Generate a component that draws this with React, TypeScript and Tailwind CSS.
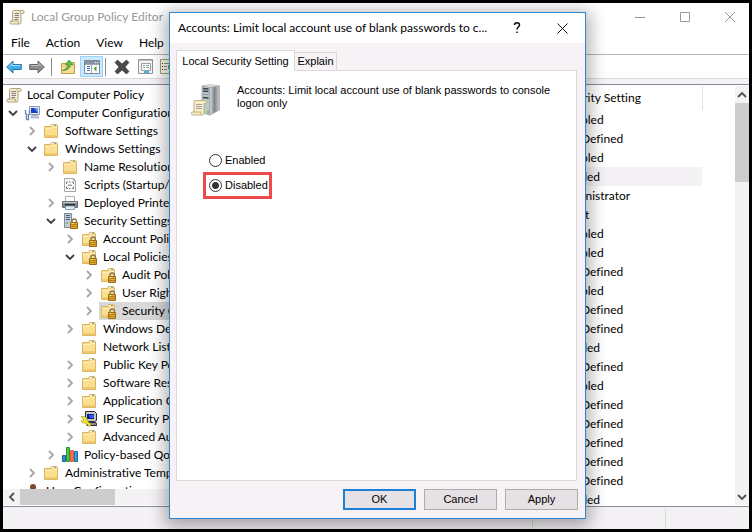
import React, { useState } from "react";

type IconName =
  | "scroll" | "computer" | "folder" | "script" | "printer" | "server"
  | "locked" | "ipsec" | "chart" | "user";

type Node = {
  label: string;
  icon: IconName;
  open?: boolean;
  leaf?: boolean;
  selected?: boolean;
  children?: Node[];
};

const tree: Node[] = [
  {
    label: "Computer Configuration", icon: "computer", open: true, children: [
      { label: "Software Settings", icon: "folder" },
      {
        label: "Windows Settings", icon: "folder", open: true, children: [
          { label: "Name Resolution Policy", icon: "folder" },
          { label: "Scripts (Startup/Shutdown)", icon: "script", leaf: true },
          { label: "Deployed Printers", icon: "printer" },
          {
            label: "Security Settings", icon: "server", open: true, children: [
              { label: "Account Policies", icon: "locked" },
              {
                label: "Local Policies", icon: "locked", open: true, children: [
                  { label: "Audit Policy", icon: "locked" },
                  { label: "User Rights Assignment", icon: "locked" },
                  { label: "Security Options", icon: "locked", selected: true },
                ],
              },
              { label: "Windows Defender Firewall", icon: "folder" },
              { label: "Network List Manager", icon: "folder", leaf: true },
              { label: "Public Key Policies", icon: "folder" },
              { label: "Software Restriction Policies", icon: "folder" },
              { label: "Application Control Policies", icon: "folder" },
              { label: "IP Security Policies", icon: "ipsec" },
              { label: "Advanced Audit Policy", icon: "folder" },
            ],
          },
          { label: "Policy-based QoS", icon: "chart" },
        ],
      },
      { label: "Administrative Templates", icon: "folder" },
    ],
  },
  { label: "User Configuration", icon: "user", leaf: true },
];

const settings = [
  "Disabled", "Not Defined", "Disabled", "Enabled", "Administrator", "Guest",
  "Disabled", "Disabled", "Not Defined", "Disabled", "Not Defined", "Not Defined",
  "Enabled", "Not Defined", "Disabled", "Not Defined", "Not Defined", "Not Defined",
  "Not Defined", "Not Defined", "Enabled",
];

function FolderShape() {
  return (
    <>
      <path d="M1.500 3.500h6l1-2h5l1 1v12h-13z" fill="#f6d887" stroke="#dcb562" />
      <path d="M2 5h12v9H2z" fill="#fbdf91" />
      <path d="M2 5.500h6.500l1-1H14" fill="none" stroke="#fff0c2" />
      <path d="M9 2.500h4" stroke="#fffbe9" />
      <path d="M11 2.500h2" stroke="#5fa8d8" />
      <path d="M2 12h12v2H2z" fill="#f1ca70" />
    </>
  );
}

function Lock() {
  return (
    <>
      <path d="M10 10V8.200a2.200 2.200 0 0 1 4.400 0V10" fill="none" stroke="#8d7a50" strokeWidth="1.400" />
      <path d="M8.500 9.500h7v6h-7z" fill="#e0a92f" stroke="#9a6b12" />
      <path d="M9 11.500h6M9 13.500h6" stroke="#b37f1b" />
      <path d="M9.500 10.500h2" stroke="#ffe08a" />
    </>
  );
}

function ScrollShape() {
  return (
    <>
      <path d="M4.500 1.500h9.500c1.500 0 1.500 3 0 3H12v9c0 1-.6 1.500-1.500 1.500H2c-1.500 0-1.500-3 0-3h1.500V3c0-1 .4-1.500 1-1.500z" fill="#f5ecd0" stroke="#b3a583" />
      <path d="M12 4.500c-1.300 0-1-3 .6-3M2 12h7.500c-.8 1.500 0 3 1 3" fill="none" stroke="#b3a583" />
      <path d="M5.500 4.500H10M5.500 6.500H10M5.500 8.500H10M5.500 10.500H9" stroke="#857b86" />
    </>
  );
}

function Icon({ name }: { name: IconName }) {
  return (
    <svg viewBox="0 0 16 16" className="size-4 shrink-0" aria-hidden="true">
      {name === "folder" && <FolderShape />}
      {name === "locked" && (<><FolderShape /><Lock /></>)}
      {name === "scroll" && <ScrollShape />}
      {name === "computer" && (
        <>
          <path d="M5.500 1.500h10v8h-10z" fill="#e8edf5" stroke="#8d97ab" />
          <path d="M7 3h7v5H7z" fill="#1a3fc4" />
          <path d="M10 3h4v5z" fill="#5f9af0" />
          <path d="M8 10h5l2 3H7z" fill="#c3cad8" stroke="#8f99ad" strokeWidth=".6" />
          <path d="M1.500 5v3c0 1 1 1.500 1 1.500v5h2v-5s1-.5 1-1.500V5" fill="none" stroke="#6d8bb0" strokeWidth="1.400" />
        </>
      )}
      {name === "script" && (
        <>
          <path d="M2.500 1.500h9l2 2v11h-11z" fill="#fbfbfb" stroke="#a6a6a6" />
          <path d="M11.500 1.500v2h2" fill="none" stroke="#a6a6a6" />
          <path d="M6 5H4.500v2M10 5h1.500v2M6 11.500H4.500v-2M10 11.500h1.500v-2M7 5h1.500M7 11.500h1.500M6 8.200h4" fill="none" stroke="#74758a" />
        </>
      )}
      {name === "printer" && (
        <>
          <path d="M3.500 1.500h9v5h-9z" fill="#fff" stroke="#aeb3b8" />
          <path d="M.5 6.500h15v6H.500z" fill="#85878b" stroke="#6a6c70" />
          <path d="M1 7.500h14" stroke="#c4c7ca" />
          <path d="M3 9h10v2H3z" fill="#292b2e" />
          <path d="M3.500 11h9v3.500h-9z" fill="#d6ecf8" stroke="#8ba1af" />
        </>
      )}
      {name === "server" && (
        <>
          <path d="M2.500.5h7v14h-7z" fill="#c3ccd5" stroke="#7c8893" />
          <path d="M4 2.500h4M4 4.500h4M4 6.500h4" stroke="#4c5f73" />
          <path d="M4 10h2" stroke="#4ba84b" />
          <Lock />
        </>
      )}
      {name === "ipsec" && (
        <>
          <path d="M4.500.5h9l2 2v7l-2 1h-9z" fill="#c6c6c6" stroke="#2b2b33" />
          <path d="M6 3h7v5H6z" fill="#101d8c" />
          <path d="M8 4h5v3H9z" fill="#2f5cf2" />
          <path d="M6 11.500h9l1 3H6z" fill="#8c8c92" stroke="#33333b" />
          <path d="M0 5.500h3l3 2v2l4 4-1.500 2L5 12H2L0 9.500l2.500.5v-2z" fill="#f7e92b" stroke="#a89c1c" strokeWidth=".7" />
        </>
      )}
      {name === "chart" && (
        <>
          <path d="M.5 8.500h3v6h-3z" fill="#2c8fc8" stroke="#16689a" />
          <path d="M4.500.5h3v14h-3z" fill="#58c04c" stroke="#2f8d2c" />
          <path d="M8.500 3.500h3v11h-3z" fill="#f4714b" stroke="#dd6644" />
          <path d="M12.500 4.500h3v10h-3z" fill="#3aa0dc" stroke="#1b6ea5" />
        </>
      )}
      {name === "user" && (
        <>
          <circle cx="9" cy="4" r="3" fill="#7a4b2b" />
          <path d="M4 15c0-5 2-7 5-7s5 2 5 7z" fill="#40679c" />
        </>
      )}
    </svg>
  );
}

function Chevron({ open }: { open?: boolean }) {
  return (
    <svg viewBox="0 0 10 10" className="size-[10px]" aria-hidden="true">
      {open ? (
        <path d="M1 3l4 4 4-4" fill="none" stroke="#404040" strokeWidth="1.800" />
      ) : (
        <path d="M3 1l4 4-4 4" fill="none" stroke="#a6a6a6" strokeWidth="1.800" />
      )}
    </svg>
  );
}

function Branch({ nodes }: { nodes: Node[] }) {
  return (
    <ul>
      {nodes.map((n) => (
        <li key={n.label}>
          <div className="flex h-[18px] items-center">
            <span className="flex w-5 shrink-0 justify-center">
              {!n.leaf && (
                <button type="button" aria-label={`Toggle ${n.label}`} className="block">
                  <Chevron open={n.open} />
                </button>
              )}
            </span>
            <span className={`flex h-full flex-1 items-center gap-[6px] pl-px whitespace-nowrap ${n.selected ? "bg-[#d9d9d9]" : ""}`}>
              <Icon name={n.icon} />
              {n.label}
            </span>
          </div>
          {n.children && (
            <div className="pl-[19px]">
              <Branch nodes={n.children} />
            </div>
          )}
        </li>
      ))}
    </ul>
  );
}

function Toolbar() {
  return (
    <div className="flex h-[23px] shrink-0 items-center pl-[3px]">
      <button type="button" aria-label="Back" className="w-[23px]">
        <svg viewBox="0 0 16 14" className="h-[14px] w-4">
          <path d="M.7 7L7 1v3.500h8.300v5H7V13z" fill="#43aee8" stroke="#2876ad" />
          <path d="M3 6.500L6 3.500v2h8" fill="none" stroke="#a9dcf8" />
        </svg>
      </button>
      <button type="button" aria-label="Forward" className="w-[22px]">
        <svg viewBox="0 0 16 14" className="h-[14px] w-4">
          <path d="M15.300 7L9 1v3.500H.7v5H9V13z" fill="#8c8c8c" stroke="#646464" />
          <path d="M2 5.500h8v-2l3 3" fill="none" stroke="#c2c2c2" />
        </svg>
      </button>
      <span className="h-[18px] w-px bg-[#8c8c8c]" />
      <button type="button" aria-label="Up one level" className="ml-2 w-5">
        <svg viewBox="0 0 16 16" className="size-4">
          <path d="M1.500 4.500h5l1-1h7v11h-13z" fill="#f1d083" stroke="#c79d4c" />
          <path d="M2 8h12v6H2z" fill="#f8dd96" />
          <path d="M2.500 11.500c4-1 5-3.500 5-6H5.500L9 1l4 4.500h-2.600C10.400 9 7 11.500 2.500 11.500z" fill="#5cc043" stroke="#368a27" strokeWidth=".7" />
        </svg>
      </button>
      <button type="button" aria-label="Show console tree" aria-pressed="true" className="flex h-[21px] w-[23px] items-center justify-center border border-[#99d1ff] bg-[#cce8ff]">
        <svg viewBox="0 0 16 14" className="h-[14px] w-4">
          <path d="M.5.500h15v13H.500z" fill="#fff" stroke="#7b8796" />
          <path d="M1 1h14v3H1z" fill="#8794a5" />
          <path d="M11 2.500h1M13 2.500h1" stroke="#fff" />
          <path d="M1 4.500h14M7.500 5v8" stroke="#9ba7b5" />
          <path d="M3 6.500h3M3 8.500h3M3 10.500h3" stroke="#3f6fae" />
          <path d="M12.500 6v5.500L9.500 8.800z" fill="#3aa832" />
        </svg>
      </button>
      <span className="ml-[2px] h-[18px] w-px bg-[#8c8c8c]" />
      <button type="button" aria-label="Delete" className="ml-2 w-6">
        <svg viewBox="0 0 16 16" className="size-4">
          <path d="M3.500 1L8 5l4.500-4L15 3.500 11 8l4 4.500-2.500 2.500L8 11l-4.500 4L1 12.500 5 8 1 3.500z" fill="#4a4a4a" stroke="#333" strokeWidth=".6" />
        </svg>
      </button>
      <button type="button" aria-label="Properties" className="w-[22px]">
        <svg viewBox="0 0 16 16" className="size-4">
          <path d="M.5.500h14v14H.500z" fill="#f5f5f5" stroke="#939393" />
          <path d="M1 1.500h13" stroke="#c0c0c0" />
          <path d="M3.500 4.500h9v7h-9z" fill="#fff" stroke="#a0a0a0" />
          <path d="M5 6.500h2M8 6.500h3M5 8.500h2M8 8.500h3" stroke="#8299b0" />
          <path d="M6 13h5" stroke="#46b4df" strokeWidth="2" />
        </svg>
      </button>
      <button type="button" aria-label="Export list" className="w-[22px]">
        <svg viewBox="0 0 16 16" className="size-4">
          <path d="M.5.500h13v14H.500z" fill="#fdfae6" stroke="#a09d85" />
          <path d="M2 4.500h1M2 7.500h1M2 10.500h1" stroke="#333" />
          <path d="M4 4.500h5M4 7.500h3M4 10.500h3" stroke="#8b8b8b" />
          <path d="M8 6h3V4l4 4-4 4v-2H8z" fill="#4db33a" />
        </svg>
      </button>
    </div>
  );
}

function ServerLogo() {
  return (
    <svg viewBox="0 0 30 32" className="h-8 w-[30px] shrink-0" aria-hidden="true">
      <defs>
        <linearGradient id="side" x1="0" x2="1"><stop stopColor="#e4e6e7" /><stop offset=".45" stopColor="#7d8285" /><stop offset="1" stopColor="#c9cccd" /></linearGradient>
      </defs>
      <path d="M11 2l8 1v28l-8-2z" fill="#bcc6cb" stroke="#8a9499" strokeWidth=".7" />
      <path d="M19 3l9.500-1v24L19 31z" fill="url(#side)" stroke="#9a9fa1" strokeWidth=".7" />
      <path d="M11 2l8-1.500L28.500 2 19 3z" fill="#e6e9ea" stroke="#a3a9ab" strokeWidth=".6" />
      <path d="M12 4.500l5.500.5M12 7l5.500.5M12 13.500l5.500.5" stroke="#34424c" strokeWidth="1.300" />
      <path d="M12 10.200l5.500.5" stroke="#7d98aa" />
      <path d="M16 27h2v2h-2z" fill="#57d12f" />
      <path d="M4 16.500h10.500c1.500 0 1.500 3 0 3H13V29c0 1.200-.8 2-2 2H1.500c-1.500 0-1.500-3 0-3H3V18c0-1 .4-1.500 1-1.500z" fill="#f8edcb" stroke="#c4b07e" />
      <path d="M1.500 28H10c-.6 1.500 0 3 1.200 3" fill="none" stroke="#c4b07e" />
      <path d="M5 20.500h6M5 22.500h6M5 24.500h6" stroke="#a59ca8" />
    </svg>
  );
}

function PolicyDialog() {
  const [value, setValue] = useState("disabled");
  const radio = "size-[13px] appearance-none rounded-full border border-[#333] bg-white checked:bg-[radial-gradient(circle,#333_3px,transparent_4px)]";
  const btn = "h-[21px] w-[73px] border border-[#adadad] bg-[#e5e1e5] leading-none";
  return (
    <section role="dialog" aria-label="Policy properties" className="absolute top-3 right-[166px] bottom-[13px] left-[169px] flex flex-col border border-[#2b86d1] bg-[#f6f2f6] font-['Liberation_Sans',Arial,sans-serif] text-[11px] shadow-[0_4px_16px_4px_rgba(0,0,0,0.32)]">
      <header className="flex h-[30px] shrink-0 items-center bg-white pr-[17px] pl-2 font-['Lato','Open_Sans',sans-serif] text-xs">
        <h2 className="flex-1 whitespace-nowrap">Accounts: Limit local account use of blank passwords to c...</h2>
        <button type="button" aria-label="Help" className="mr-[34px] w-3">
          <svg viewBox="0 0 8 12" className="mx-auto h-3 w-2"><path d="M1.500 3c0-3 5-3 5 0 0 2-2.500 2-2.500 4.500M4 9.500v1.500" fill="none" stroke="#111" strokeWidth="1.500" /></svg>
        </button>
        <button type="button" aria-label="Close">
          <svg viewBox="0 0 11 11" className="size-[11px]"><path d="M.5.500l10 10M10.500.500l-10 10" stroke="#111" /></svg>
        </button>
      </header>
      <div className="flex min-h-0 flex-1 flex-col pt-[7px] pr-[7px] pb-2 pl-[6px]">
        <div role="tablist" className="flex items-end">
          <button type="button" role="tab" aria-selected="true" className="z-10 -mb-px h-[21px] w-[119px] border border-b-0 border-[#dadada] bg-white">Local Security Setting</button>
          <button type="button" role="tab" aria-selected="false" className="h-[18px] w-[42px] border border-b-0 border-l-0 border-[#dadada]">Explain</button>
        </div>
        <div role="tabpanel" className="mr-px min-h-0 flex-1 border border-[#dadada] bg-white pt-[13px] pl-[14px]">
          <div className="flex gap-4">
            <ServerLogo />
            <p className="w-[320px] leading-[13px]">Accounts: Limit local account use of blank passwords to console logon only</p>
          </div>
          <div className="mt-8 flex flex-col items-start pl-3">
            <label className="flex h-6 items-center gap-[3px] pl-[6px]">
              <input type="radio" name="state" className={radio} checked={value === "enabled"} onChange={() => setValue("enabled")} />
              Enabled
            </label>
            <label className="flex h-[27px] items-center gap-[3px] border-3 border-[#eb4b4b] pr-px pl-[3px]">
              <input type="radio" name="state" className={radio} checked={value === "disabled"} onChange={() => setValue("disabled")} />
              Disabled
            </label>
          </div>
        </div>
        <div className="flex justify-end gap-2 pt-2">
          <button type="button" className="h-[21px] w-[73px] border-2 border-[#1c80d4] bg-[#e5e1e5] leading-none">OK</button>
          <button type="button" className={btn}>Cancel</button>
          <button type="button" className={btn}>Apply</button>
        </div>
      </div>
    </section>
  );
}

export default function App() {
  return (
    <main className="relative flex h-screen flex-col overflow-hidden border-3 border-black bg-white font-['Lato','Open_Sans',sans-serif] text-xs text-black [font-variant-ligatures:none]">
      <header className="flex h-7 shrink-0 items-center gap-[6px] pr-[14px] pl-[6px]">
        <Icon name="scroll" />
        <h1 className="flex-1 text-[#999]">Local Group Policy Editor</h1>
        <div className="flex items-center gap-[35px] text-[#999]">
          <button type="button" aria-label="Minimize"><svg viewBox="0 0 10 10" className="size-[10px]"><path d="M0 5.500h10" stroke="currentColor" /></svg></button>
          <button type="button" aria-label="Maximize"><svg viewBox="0 0 10 10" className="size-[10px]"><path d="M.5.500h9v9h-9z" fill="none" stroke="currentColor" /></svg></button>
          <button type="button" aria-label="Close window"><svg viewBox="0 0 10 10" className="size-[10px]"><path d="M0 0l10 10M10 0L0 10" stroke="currentColor" /></svg></button>
        </div>
      </header>
      <nav className="flex h-6 shrink-0 items-center gap-4 border-b border-[#b4b4b4] pl-2">
        <button type="button">File</button>
        <button type="button">Action</button>
        <button type="button">View</button>
        <button type="button">Help</button>
      </nav>
      <Toolbar />
      <div className="h-[7px] shrink-0 border-b border-[#8a8798] border-t border-t-[#dcd8dc] bg-[#f5f2f5]" />
      <div className="flex min-h-0 flex-1 border-b border-[#8a8f96] pt-px pb-px">
        <div className="flex w-[230px] shrink-0 flex-col">
          <div className="min-h-0 flex-1 overflow-hidden">
            <div className="flex h-[18px] items-center gap-[5px] pl-[3px]">
              <Icon name="scroll" />
              Local Computer Policy
            </div>
            <Branch nodes={tree} />
          </div>
          <div className="flex h-4 shrink-0 items-center bg-[#f5f2f5]">
            <button type="button" aria-label="Scroll left" className="flex w-[17px] justify-center">
              <svg viewBox="0 0 8 10" className="h-[10px] w-2"><path d="M6 1L2 5l4 4" fill="none" stroke="#505050" strokeWidth="1.800" /></svg>
            </button>
            <span className="h-full w-[95px] bg-[#cdcdcd]" />
          </div>
        </div>
        <div className="min-w-0 flex-1 overflow-hidden">
          <table className="w-full table-fixed border-collapse text-left">
            <thead>
              <tr className="h-6">
                <th aria-label="Policy" />
                <th className="w-[152px] border-r border-[#e2e2e2] p-0 pl-2 font-normal whitespace-nowrap">Security Setting</th>
                <td className="w-[33px]" />
              </tr>
            </thead>
            <tbody>
              {settings.map((s, i) => (
                <tr key={i} className="h-[19px]">
                  <td className={i === 3 ? "bg-[#f5f2f5] p-0" : "p-0"} />
                  <td className={i === 3 ? "bg-[#f5f2f5] p-0 pl-2 leading-[19px]" : "p-0 pl-2 leading-[19px]"}>{s}</td>
                  <td className="p-0" />
                </tr>
              ))}
            </tbody>
          </table>
        </div>
        <div className="flex w-[14px] shrink-0 flex-col items-center bg-[#f5f2f5]">
          <button type="button" aria-label="Scroll up" className="flex h-[17px] items-center">
            <svg viewBox="0 0 10 8" className="h-2 w-[10px]"><path d="M1 6l4-4 4 4" fill="none" stroke="#505050" strokeWidth="1.800" /></svg>
          </button>
          <span className="h-[79px] w-full bg-[#cdcdcd]" />
          <button type="button" aria-label="Scroll down" className="mt-auto flex h-[17px] items-center">
            <svg viewBox="0 0 10 8" className="h-2 w-[10px]"><path d="M1 2l4 4 4-4" fill="none" stroke="#505050" strokeWidth="1.800" /></svg>
          </button>
        </div>
      </div>
      <footer className="flex h-[22px] shrink-0 justify-end bg-[#f5f2f5] pt-[2px]">
        <span className="flex-1 border-r border-[#d7d7d7]" />
        <span className="w-[133px] border-r border-[#d7d7d7]" />
        <span className="w-[83px]" />
      </footer>
      <div className="absolute -inset-[3px]">
        <PolicyDialog />
      </div>
    </main>
  );
}
